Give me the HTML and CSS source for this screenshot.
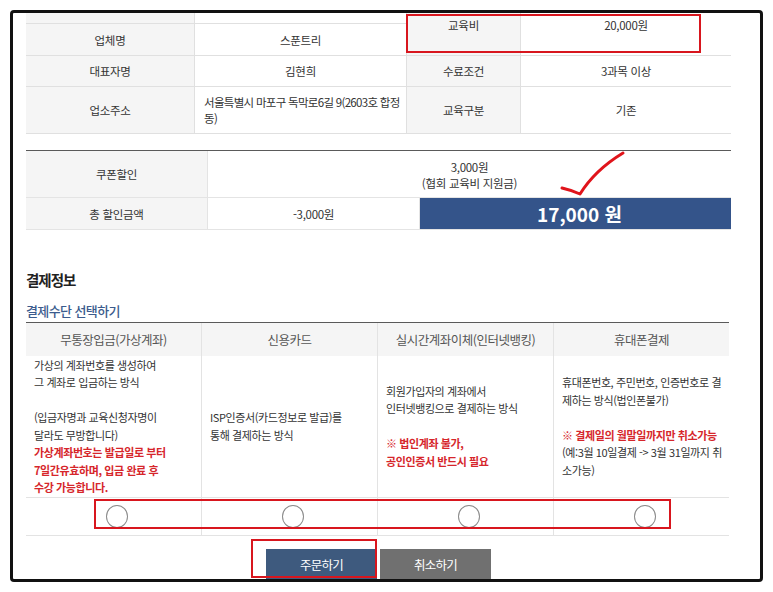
FILE: index.html
```html
<!DOCTYPE html>
<html lang="ko">
<head>
<meta charset="utf-8">
<title>결제정보</title>
<link rel="stylesheet" href="styles.css">
</head>
<body>
<div class="frame">
  <div class="content">
    <div class="info">
      <div class="c lab"></div>
      <div class="c"></div>
      <div class="c lab span2 top">교육비</div>
      <div class="c span2 top">20,000원</div>
      <div class="c lab">업체명</div>
      <div class="c">스푼트리</div>
      <div class="c lab">대표자명</div>
      <div class="c">김현희</div>
      <div class="c lab">수료조건</div>
      <div class="c">3과목 이상</div>
      <div class="c lab">업소주소</div>
      <div class="c left">서울특별시 마포구 독막로6길 9(2603호 합정<br>동)</div>
      <div class="c lab">교육구분</div>
      <div class="c">기존</div>
    </div>

    <div class="coupon">
      <div class="c lab">쿠폰할인</div>
      <div class="c span-col2 two">3,000원<br>(협회 교육비 지원금)</div>
      <div class="c lab">총 할인금액</div>
      <div class="c">-3,000원</div>
      <div class="c total">17,000 원</div>
    </div>

    <h2 class="title">결제정보</h2>
    <h3 class="sub">결제수단 선택하기</h3>

    <div class="pay">
      <div class="ph">무통장입금(가상계좌)</div>
      <div class="ph">신용카드</div>
      <div class="ph">실시간계좌이체(인터넷뱅킹)</div>
      <div class="ph">휴대폰결제</div>

      <div class="pb"><div class="txt">가상의 계좌번호를 생성하여<br>그 계좌로 입금하는 방식<br>&nbsp;<br>(입금자명과 교육신청자명이<br>달라도 무방합니다)<br><span class="red">가상계좌번호는 발급일로 부터<br>7일간유효하며, 입금 완료 후<br>수강 가능합니다.</span></div></div>
      <div class="pb"><div class="txt">ISP인증서(카드정보로 발급)를<br>통해 결제하는 방식</div></div>
      <div class="pb"><div class="txt">회원가입자의 계좌에서<br>인터넷뱅킹으로 결제하는 방식<br>&nbsp;<br><span class="red">※ 법인계좌 불가,<br>공인인증서 반드시 필요</span></div></div>
      <div class="pb"><div class="txt">휴대폰번호, 주민번호, 인증번호로 결<br>제하는 방식(법인폰불가)<br>&nbsp;<br><span class="red">※ 결제일의 월말일까지만 취소가능</span><br>(예:3월 10일결제 -&gt; 3월 31일까지 취<br>소가능)</div></div>

      <div class="pr"><span class="radio"></span></div>
      <div class="pr"><span class="radio"></span></div>
      <div class="pr"><span class="radio"></span></div>
      <div class="pr"><span class="radio"></span></div>
    </div>

    <div class="buttons">
      <button class="btn order">주문하기</button>
      <button class="btn cancel">취소하기</button>
    </div>
  </div>
</div>

<div class="mark mark-fee"></div>
<div class="mark mark-radio"></div>
<div class="mark mark-order"></div>
<svg class="check" width="75" height="50" viewBox="0 0 75 50">
  <path d="M7 40 Q16 42 25 46 Q40 22 68 5" fill="none" stroke="#e0141b" stroke-width="3" stroke-linecap="round" stroke-linejoin="round"/>
</svg>
</body>
</html>
```

FILE: styles.css
```css
* { box-sizing: border-box; }

html, body {
  margin: 0;
  padding: 0;
  background: #ffffff;
}

body {
  font-family: "Noto Sans CJK KR", "Noto Sans", sans-serif;
  color: #333333;
  width: 773px;
  height: 592px;
  overflow: hidden;
}

.frame {
  margin: 10px 0 0 10px;
  width: 753px;
  height: 572px;
  border: 3px solid #111111;
  border-radius: 4px;
  overflow: hidden;
  background: #ffffff;
}

.content {
  padding-left: 13px;
  width: 718px;
}

/* top info table */
.info {
  display: grid;
  grid-template-columns: 168px 211px 113px 210px;
  grid-template-rows: 10px 31px 30px 46px;
  gap: 1px;
  padding-bottom: 1px;
  background: #e0e0e0;
  width: 705px;
}

.c {
  background: #ffffff;
  display: flex;
  align-items: center;
  justify-content: center;
  text-align: center;
  font-size: 11.5px;
  letter-spacing: -0.3px;
  line-height: 16px;
  white-space: nowrap;
  min-width: 0;
}

.c.lab { background: #f5f5f5; }

.c.span2 { grid-row: span 2; }

.c.top {
  align-items: flex-start;
  padding-top: 4px;
}

.c.left {
  justify-content: flex-start;
  text-align: left;
  padding-left: 9px;
  letter-spacing: -0.7px;
}

/* coupon table */
.coupon {
  margin-top: 16px;
  display: grid;
  grid-template-columns: 181px 211px 311px;
  grid-template-rows: 46px 31px;
  gap: 1px;
  padding-bottom: 1px;
  border-top: 1px solid #5a5a5a;
  background: #e4e4e4;
  width: 705px;
}

.c.span-col2 { grid-column: span 2; }

.c.two { padding-top: 1px; }

.c.total {
  background: #34548a;
  color: #ffffff;
  font-size: 19px;
  font-weight: 700;
  letter-spacing: 0;
  padding-left: 8px;
}

/* headings */
.title {
  margin: 40px 0 0 0;
  font-size: 14.5px;
  font-weight: 700;
  letter-spacing: -1px;
  line-height: 20px;
  color: #222222;
}

.sub {
  margin: 12px 0 0 0;
  font-size: 13px;
  font-weight: 500;
  letter-spacing: -0.6px;
  line-height: 18px;
  color: #3b5b8d;
}

/* payment table */
.pay {
  margin-top: 2px;
  width: 703px;
  display: grid;
  grid-template-columns: 175px 176px 176px 176px;
  grid-template-rows: 33px 142px 38px;
  border-top: 1px solid #5a5a5a;
}

.ph, .pb, .pr {
  border-left: 1px solid #e3e3e3;
  min-width: 0;
}

.ph:nth-child(4n+1), .pb:nth-child(4n+1), .pr:nth-child(4n+1) {
  border-left: none;
}

.ph {
  background: #f5f5f5;
  display: flex;
  align-items: center;
  justify-content: center;
  font-size: 12.5px;
  letter-spacing: -0.5px;
  color: #555555;
  white-space: nowrap;
}

.pb {
  display: flex;
  align-items: center;
  padding-left: 8px;
  border-bottom: 1px solid #e3e3e3;
  color: #333333;
}

.pb .txt {
  font-size: 11px;
  letter-spacing: -0.4px;
  line-height: 17.5px;
  white-space: nowrap;
}

.pb .red {
  color: #d6262b;
  font-weight: 700;
}

.pr {
  display: flex;
  align-items: center;
  justify-content: center;
  border-bottom: 1px solid #e3e3e3;
  padding-left: 6px;
}

.radio {
  display: block;
  width: 22px;
  height: 23px;
  border: 1px solid #8a8a8a;
  border-radius: 50%;
  background: #ffffff;
}

/* buttons */
.buttons {
  margin-top: 13px;
  width: 705px;
  display: flex;
  justify-content: center;
  gap: 3px;
}

.btn {
  width: 111px;
  height: 30px;
  border: none;
  padding: 0;
  font-family: "Noto Sans CJK KR", sans-serif;
  font-size: 12.5px;
  letter-spacing: -0.8px;
  color: #ffffff;
}

.btn.order { background: #3e5a7e; }
.btn.cancel { background: #707070; }

/* annotations */
.mark {
  position: absolute;
  border: 2px solid #d8161e;
}

.mark-fee { left: 406px; top: 14px; width: 295px; height: 39px; }
.mark-radio { left: 94px; top: 499px; width: 577px; height: 30px; }
.mark-order { left: 251px; top: 539px; width: 126px; height: 39px; }

.check {
  position: absolute;
  left: 555px;
  top: 148px;
}
```
